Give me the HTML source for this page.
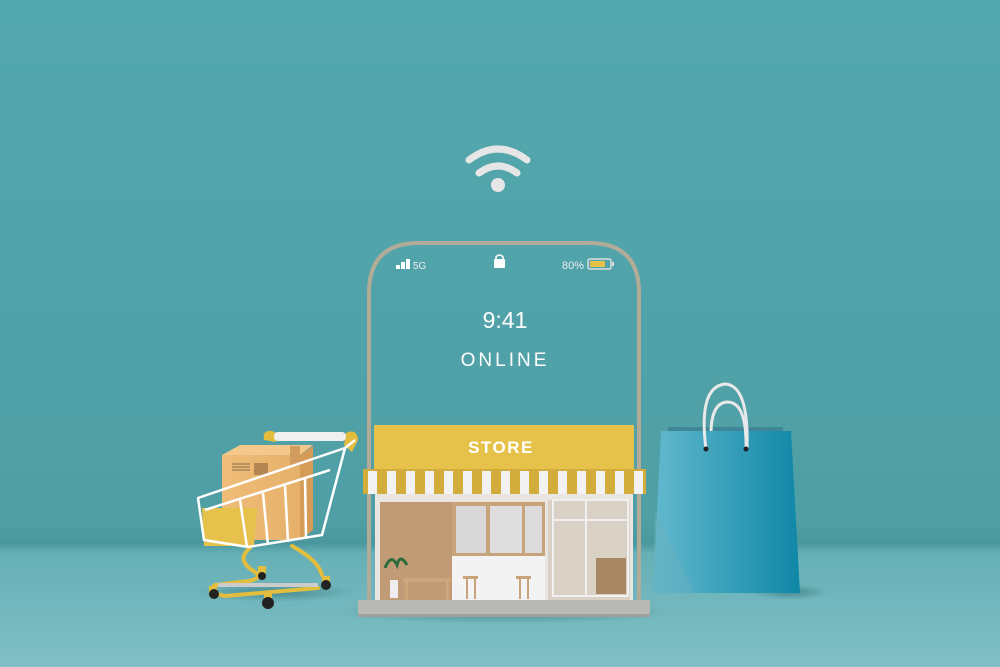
<!DOCTYPE html>
<html><head><style>html,body{margin:0;padding:0;width:1000px;height:667px;overflow:hidden}svg{display:block}</style></head><body>
<svg width="1000" height="667" viewBox="0 0 1000 667" xmlns="http://www.w3.org/2000/svg" font-family="Liberation Sans, sans-serif">
<defs>
<linearGradient id="bg" x1="0" y1="0" x2="0" y2="1">
<stop offset="0" stop-color="#53a8ae"/><stop offset="0.78" stop-color="#4f9fa5"/><stop offset="0.815" stop-color="#4a989e"/><stop offset="0.83" stop-color="#66b0b6"/><stop offset="1" stop-color="#80c0c6"/></linearGradient>
<linearGradient id="bag" x1="0" y1="0" x2="1" y2="0"><stop offset="0" stop-color="#62b9ce"/><stop offset="1" stop-color="#0f87a6"/></linearGradient>
<linearGradient id="box" x1="0" y1="0" x2="1" y2="0"><stop offset="0" stop-color="#efbd78"/><stop offset="1" stop-color="#e5b06a"/></linearGradient>
<radialGradient id="sh" cx="0.5" cy="0.5" r="0.5"><stop offset="0" stop-color="#2e6e74" stop-opacity="0.6"/><stop offset="1" stop-color="#2e6e74" stop-opacity="0"/></radialGradient>
</defs>
<rect width="1000" height="667" fill="url(#bg)"/>
<g fill="none" stroke="#e6e6e6" stroke-linecap="round" stroke-width="7">
<path d="M469 160 Q498 138 527 160"/><path d="M479 173 Q498 159 517 173"/></g>
<circle cx="498" cy="185" r="7" fill="#e6e6e6"/>
<path d="M369 600 V293 Q369 243 419 243 H589 Q639 243 639 293 V600" fill="none" stroke="#b2ab97" stroke-width="4"/>
<g fill="#fff"><rect x="396" y="265" width="4" height="4"/><rect x="401" y="262" width="4" height="7"/><rect x="406" y="259" width="4" height="10"/>
<text x="413" y="269" font-size="10" fill="#eee">5G</text>
<rect x="494" y="259" width="11" height="9" rx="1"/><path d="M496 260 V257 Q499.5 253 503 257 V260" fill="none" stroke="#fff" stroke-width="1.6"/>
<text x="562" y="269" font-size="11" fill="#eee">80%</text>
<rect x="588" y="259" width="23" height="10" rx="2" fill="none" stroke="#ddd" stroke-width="1.5"/><rect x="590" y="261" width="15" height="6" fill="#e6c14a"/><rect x="612" y="262" width="2" height="4" fill="#ddd"/></g>
<text x="505" y="328" font-size="23" fill="#fff" text-anchor="middle">9:41</text>
<text x="505" y="366" font-size="19" fill="#fff" text-anchor="middle" letter-spacing="3">ONLINE</text>
<ellipse cx="505" cy="612" rx="170" ry="12" fill="url(#sh)"/>
<ellipse cx="790" cy="592" rx="40" ry="8" fill="url(#sh)"/>
<rect x="374" y="425" width="260" height="44" fill="#e6c24b"/>
<text x="501" y="453" font-size="17" font-weight="bold" fill="#fff" text-anchor="middle" letter-spacing="1.5">STORE</text>
<rect x="363" y="469" width="283" height="25" fill="#d2ad3c"/>
<g fill="#f2f2f2">
<rect x="368" y="471" width="9" height="23"/><rect x="387" y="471" width="9" height="23"/><rect x="406" y="471" width="9" height="23"/><rect x="425" y="471" width="9" height="23"/><rect x="444" y="471" width="9" height="23"/><rect x="463" y="471" width="9" height="23"/><rect x="482" y="471" width="9" height="23"/><rect x="501" y="471" width="9" height="23"/><rect x="520" y="471" width="9" height="23"/><rect x="539" y="471" width="9" height="23"/><rect x="558" y="471" width="9" height="23"/><rect x="577" y="471" width="9" height="23"/><rect x="596" y="471" width="9" height="23"/><rect x="615" y="471" width="9" height="23"/><rect x="634" y="471" width="9" height="23"/></g>
<rect x="375" y="494" width="258" height="106" fill="#e9e6e1"/>
<rect x="380" y="502" width="72" height="98" fill="#c19b75"/>
<rect x="452" y="502" width="93" height="54" fill="#c9a37a"/>
<rect x="456" y="506" width="30" height="47" fill="#d8d8d8"/><rect x="490" y="506" width="32" height="47" fill="#dedede"/><rect x="525" y="506" width="17" height="47" fill="#dcdcdc"/>
<rect x="452" y="556" width="93" height="44" fill="#f3f3f3"/>
<rect x="548" y="500" width="82" height="100" fill="#d9d0c6"/>
<g stroke="#f0f0f0" stroke-width="2" fill="none"><rect x="553" y="500" width="75" height="96"/><line x1="586" y1="500" x2="586" y2="596"/><line x1="553" y1="520" x2="628" y2="520"/></g>
<rect x="596" y="558" width="30" height="36" fill="#a88864"/>
<path d="M385 568 q6 -15 12 -3 q3 -12 10 0" stroke="#2d6a3c" stroke-width="3" fill="none"/>
<rect x="390" y="580" width="8" height="18" fill="#eee"/>
<rect x="403" y="578" width="48" height="4" fill="#cda77c"/><rect x="405" y="582" width="3" height="18" fill="#cda77c"/><rect x="446" y="582" width="3" height="18" fill="#cda77c"/>
<rect x="463" y="576" width="15" height="3" fill="#c9a37a"/><rect x="466" y="579" width="2" height="20" fill="#c9a37a"/><rect x="474" y="579" width="2" height="20" fill="#c9a37a"/>
<rect x="516" y="576" width="15" height="3" fill="#c9a37a"/><rect x="519" y="579" width="2" height="20" fill="#c9a37a"/><rect x="527" y="579" width="2" height="20" fill="#c9a37a"/>
<rect x="358" y="600" width="292" height="17" fill="#b8b8b4"/>
<rect x="358" y="614" width="292" height="3" fill="#9f9f9b"/>
<rect x="668" y="427" width="115" height="6" fill="#3f8797"/>
<path d="M661 431 H791 L800 593 H653 Z" fill="url(#bag)"/>
<path d="M655 510 L695 593 H653 Z" fill="#6ab0bd" opacity="0.5"/>
<g fill="none" stroke="#e9e9e9" stroke-width="3"><path d="M706 449 Q698 387 725 384 Q749 385 747 449"/><path d="M711 431 Q712 402 728 402 Q747 403 746 449"/></g>
<circle cx="706" cy="449" r="2.5" fill="#222"/><circle cx="746" cy="449" r="2.5" fill="#222"/>
<!-- cart -->
<ellipse cx="275" cy="592" rx="80" ry="10" fill="url(#sh)"/>
<g fill="none" stroke="#e2bd3e" stroke-width="4" stroke-linecap="round">
<path d="M250 548 Q235 560 255 572 Q265 580 240 582 L215 585 Q205 592 225 596 L318 588"/>
<path d="M292 546 Q318 560 322 575"/>
</g>
<g fill="#e2bd3e"><rect x="209" y="586" width="8" height="8"/><rect x="264" y="594" width="8" height="7"/><rect x="258" y="566" width="8" height="7"/><rect x="322" y="576" width="8" height="7"/></g>
<path d="M264 440 Q262 430 272 431 L278 434 L276 442Z" fill="#e2bd3e"/>
<path d="M346 433 Q357 428 358 440 L352 452 L344 445Z" fill="#e2bd3e"/>
<rect x="274" y="432" width="72" height="9" rx="4" fill="#f0f0f0"/>
<rect x="218" y="583" width="100" height="4" fill="#ccc"/>
<path d="M222 455 H300 V540 H222Z" fill="url(#box)"/>
<path d="M300 455 L313 446 V530 L300 540Z" fill="#d59c58"/>
<path d="M222 455 L240 445 H313 L300 455Z" fill="#f4c88a"/>
<rect x="290" y="446" width="10" height="20" fill="#d29d5e"/>
<g stroke="#9a7a55" stroke-width="1.2"><line x1="232" y1="464" x2="250" y2="464"/><line x1="232" y1="467" x2="250" y2="467"/><line x1="232" y1="470" x2="250" y2="470"/></g>
<rect x="254" y="463" width="14" height="12" fill="#b48654"/>
<path d="M202 508 h55 l-3 38 h-50z" fill="#e6c24d"/>
<g fill="none" stroke="#fff" stroke-width="2.5" stroke-linejoin="round">
<path d="M198 498 L345 448 L322 535 L248 547 L204 540 Z"/>
<path d="M205 510 L330 470"/><path d="M240 500 L247 547"/><path d="M263 493 L268 545"/><path d="M285 486 L288 542"/><path d="M305 478 L306 538"/>
<path d="M345 448 L355 440"/></g>
<g fill="#222"><circle cx="214" cy="594" r="5"/><circle cx="268" cy="603" r="6"/><circle cx="262" cy="576" r="4"/><circle cx="326" cy="585" r="5"/></g>
</svg>
</body></html>
